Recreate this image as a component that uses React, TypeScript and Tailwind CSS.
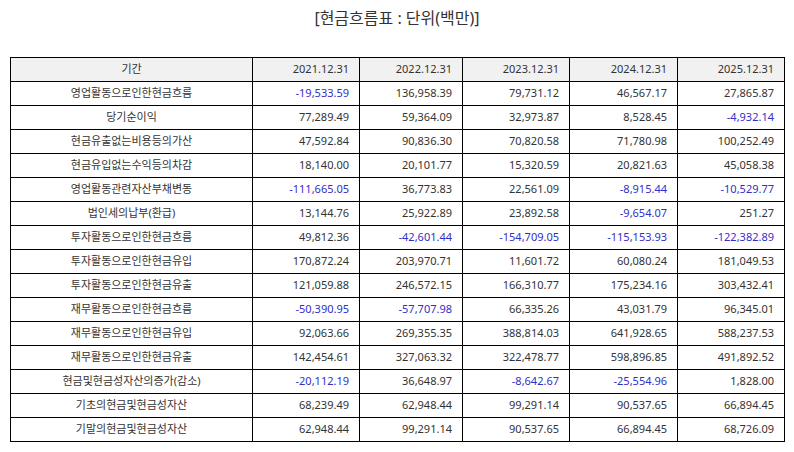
const years = ["2021.12.31", "2022.12.31", "2023.12.31", "2024.12.31", "2025.12.31"];

const rows: [string, string[]][] = [
  ["영업활동으로인한현금흐름", ["-19,533.59", "136,958.39", "79,731.12", "46,567.17", "27,865.87"]],
  ["당기순이익", ["77,289.49", "59,364.09", "32,973.87", "8,528.45", "-4,932.14"]],
  ["현금유출없는비용등의가산", ["47,592.84", "90,836.30", "70,820.58", "71,780.98", "100,252.49"]],
  ["현금유입없는수익등의차감", ["18,140.00", "20,101.77", "15,320.59", "20,821.63", "45,058.38"]],
  ["영업활동관련자산부채변동", ["-111,665.05", "36,773.83", "22,561.09", "-8,915.44", "-10,529.77"]],
  ["법인세의납부(환급)", ["13,144.76", "25,922.89", "23,892.58", "-9,654.07", "251.27"]],
  ["투자활동으로인한현금흐름", ["49,812.36", "-42,601.44", "-154,709.05", "-115,153.93", "-122,382.89"]],
  ["투자활동으로인한현금유입", ["170,872.24", "203,970.71", "11,601.72", "60,080.24", "181,049.53"]],
  ["투자활동으로인한현금유출", ["121,059.88", "246,572.15", "166,310.77", "175,234.16", "303,432.41"]],
  ["재무활동으로인한현금흐름", ["-50,390.95", "-57,707.98", "66,335.26", "43,031.79", "96,345.01"]],
  ["재무활동으로인한현금유입", ["92,063.66", "269,355.35", "388,814.03", "641,928.65", "588,237.53"]],
  ["재무활동으로인한현금유출", ["142,454.61", "327,063.32", "322,478.77", "598,896.85", "491,892.52"]],
  ["현금및현금성자산의증가(감소)", ["-20,112.19", "36,648.97", "-8,642.67", "-25,554.96", "1,828.00"]],
  ["기초의현금및현금성자산", ["68,239.49", "62,948.44", "99,291.14", "90,537.65", "66,894.45"]],
  ["기말의현금및현금성자산", ["62,948.44", "99,291.14", "90,537.65", "66,894.45", "68,726.09"]],
];

export default function App() {
  return (
    <main
      className="w-[794px] h-[452px] bg-white px-[10px] text-[#333]"
      style={{ fontFamily: '"Noto Sans", "Noto Sans CJK KR", sans-serif' }}
    >
      <h1 className="h-[57px] pt-[6px] text-center text-[16px] leading-[24px] font-normal">
        [현금흐름표 : 단위(백만)]
      </h1>

      <table className="w-[774px] table-fixed border-collapse border border-black text-[11px]">
        <colgroup>
          <col className="w-[242px]" />
          <col className="w-[107px]" />
          <col className="w-[103px]" />
          <col className="w-[107px]" />
          <col className="w-[108px]" />
          <col className="w-[107px]" />
        </colgroup>
        <thead>
          <tr className="bg-[#f1f1f1]">
            <th className="h-[24px] border border-black p-0 text-center font-normal">기간</th>
            {years.map((y) => (
              <th key={y} className="h-[24px] border border-black p-0 pr-[10px] text-right font-normal">
                {y}
              </th>
            ))}
          </tr>
        </thead>
        <tbody>
          {rows.map(([label, vals]) => (
            <tr key={label}>
              <td className="h-[24px] border border-black p-0 text-center">{label}</td>
              {vals.map((v, i) => (
                <td
                  key={i}
                  className={
                    v.startsWith("-")
                      ? "h-[24px] border border-black p-0 pr-[10px] text-right text-[#3030c8]"
                      : "h-[24px] border border-black p-0 pr-[10px] text-right"
                  }
                >
                  {v}
                </td>
              ))}
            </tr>
          ))}
        </tbody>
      </table>
    </main>
  );
}
